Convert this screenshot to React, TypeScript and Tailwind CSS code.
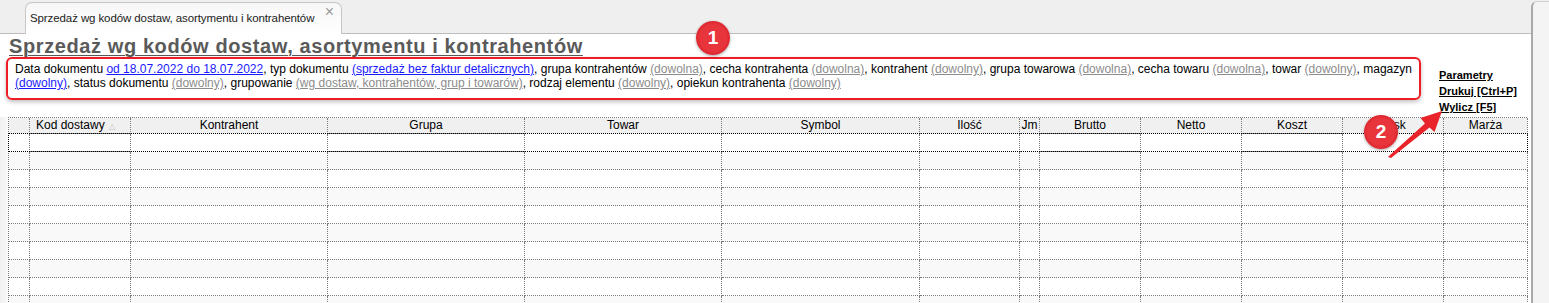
import React from 'react';

// Kolumny siatki: szerokość w px + wyrównanie nagłówka
const columns: { label: string; w: number; left?: boolean; sort?: boolean }[] = [
  { label: '', w: 21 },
  { label: 'Kod dostawy', w: 101, left: true, sort: true },
  { label: 'Kontrahent', w: 197 },
  { label: 'Grupa', w: 197 },
  { label: 'Towar', w: 197 },
  { label: 'Symbol', w: 198 },
  { label: 'Ilość', w: 100 },
  { label: 'Jm', w: 20 },
  { label: 'Brutto', w: 101 },
  { label: 'Netto', w: 101 },
  { label: 'Koszt', w: 101 },
  { label: 'Zysk', w: 101 },
  { label: 'Marża', w: 84 },
];

const gridCols =
  'grid grid-cols-[21px_101px_197px_197px_197px_198px_100px_20px_101px_101px_101px_101px_84px]';

function Gray({ children }: { children: React.ReactNode }) {
  return <span className="text-[#8c8c8c] underline">{children}</span>;
}

function Blue({ children }: { children: React.ReactNode }) {
  return <span className="text-[#1a1aff] underline">{children}</span>;
}

function Badge({ n, className }: { n: string; className: string }) {
  return (
    <div
      className={
        'absolute w-[34px] h-[34px] rounded-full bg-[radial-gradient(circle,#e8343b_55%,#d9222a_75%,#e0484e_100%)] shadow-[0_1px_3px_rgba(0,0,0,0.35)] flex items-center justify-center text-white text-[19px] font-bold ' +
        className
      }
    >
      {n}
    </div>
  );
}

export default function App() {
  const rows = Array.from({ length: 10 }, (_, i) => i);

  return (
    <div className="relative w-[1549px] h-[303px] overflow-hidden bg-[#efefef] font-['Liberation_Sans',Arial,sans-serif] text-black">
      <div className="flex h-full">
        {/* główna część z zakładką */}
        <div className="w-[1531px] flex flex-col">
          {/* pasek zakładek */}
          <div className="h-[34px] shrink-0 border-b border-[#bdbdbd] bg-[#efefef] flex items-end pl-[25px]">
            <div className="relative -mb-px h-[32px] w-[317px] rounded-t-[7px] border border-b-0 border-[#c6c6c6] bg-[linear-gradient(#f7f7f7,#ffffff)] flex items-center pl-[4px]">
              <span className="text-[11.5px] tracking-[-0.1px] text-[#222]">
                Sprzedaż wg kodów dostaw, asortymentu i kontrahentów
              </span>
              <span className="absolute right-[7px] top-[1px] text-[16px] leading-none text-[#9a9a9a]">×</span>
            </div>
          </div>

          {/* zawartość */}
          <div className="flex-1 bg-white">
            <div className="pl-[9px] pt-px h-[23px] text-[20px] leading-[22px] tracking-[0.6px] font-bold text-[#5a5a5a] underline decoration-1 underline-offset-[2px]">
              Sprzedaż wg kodów dostaw, asortymentu i kontrahentów
            </div>

            <div className="flex h-[59px]">
              <div className="ml-[6px] w-[1415px] h-[43px] rounded-[6px] border-2 border-[#ee1c24] shadow-[0_2px_4px_rgba(0,0,0,0.25)] pl-[7px] pt-[3px] text-[12px] leading-[14px]">
                Data dokumentu <Blue>od 18.07.2022 do 18.07.2022</Blue>, typ dokumentu{' '}
                <Blue>(sprzedaż bez faktur detalicznych)</Blue>, grupa kontrahentów <Gray>(dowolna)</Gray>, cecha
                kontrahenta <Gray>(dowolna)</Gray>, kontrahent <Gray>(dowolny)</Gray>, grupa towarowa{' '}
                <Gray>(dowolna)</Gray>, cecha towaru <Gray>(dowolna)</Gray>, towar <Gray>(dowolny)</Gray>, magazyn{' '}
                <Blue>(dowolny)</Blue>, status dokumentu <Gray>(dowolny)</Gray>, grupowanie{' '}
                <Gray>(wg dostaw, kontrahentów, grup i towarów)</Gray>, rodzaj elementu <Gray>(dowolny)</Gray>,
                opiekun kontrahenta <Gray>(dowolny)</Gray>
              </div>
              <div className="ml-[18px] pt-[10px] flex flex-col text-[11px] leading-[16px] font-bold underline">
                <span>Parametry</span>
                <span>Drukuj [Ctrl+P]</span>
                <span>Wylicz [F5]</span>
              </div>
            </div>

            {/* siatka */}
            <div className="mt-[1px] pl-[8px] bg-[linear-gradient(to_right,#f1f1f1,#f8f8f8_7px,#ffffff_8px)] h-full">
              <div className="w-[1519px] border-l border-t border-dotted border-[#7a7a7a]">
                <div className={gridCols + ' h-[16px] bg-[#f0f0f0] text-[12px] leading-[15px]'}>
                  {columns.map((c, i) => (
                    <div
                      key={i}
                      className={
                        'border-r border-b border-dotted border-[#7a7a7a] overflow-hidden whitespace-nowrap ' +
                        (c.left ? 'pl-[6px] text-left' : 'text-center')
                      }
                    >
                      {c.label}
                      {c.sort && <span className="ml-[4px] text-[8px] text-[#c4c4c4]">△</span>}
                    </div>
                  ))}
                </div>
                {rows.map((r) => (
                  <div
                    key={r}
                    className={gridCols + ' relative h-[18px] ' + (r % 2 === 0 ? 'bg-white' : 'bg-[#f9f9f9]')}
                  >
                    {columns.map((_, i) => (
                      <div key={i} className="border-r border-b border-dotted border-[#7a7a7a]" />
                    ))}
                    {r === 0 && (
                      <div className="pointer-events-none absolute -left-px -top-px w-[1520px] h-[19px] border border-dotted border-black" />
                    )}
                  </div>
                ))}
              </div>
            </div>
          </div>
        </div>

        {/* prawy panel */}
        <div className="flex-1 mt-[1px] rounded-tl-[6px] border-l-2 border-t border-[#a9a9a9] border-t-[#d0d0d0] bg-[#f4f4f4]" />
      </div>

      {/* adnotacje */}
      <Badge n="1" className="left-[696px] top-[21px]" />
      <Badge n="2" className="left-[1364px] top-[115px]" />
      <svg className="absolute left-[1385px] top-[106px]" width="60" height="56" viewBox="0 0 60 56">
        <polygon points="3,51 5,49 40,17.5 35.5,12 57,5 49.5,26 44.5,21.5 6,52" fill="#e8232a" />
      </svg>
    </div>
  );
}
